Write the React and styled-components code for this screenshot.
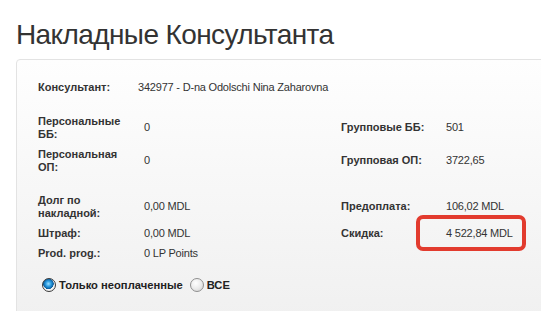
import React from "react";
import styled, { createGlobalStyle } from "styled-components";

const GlobalStyle = createGlobalStyle`
  html, body {
    margin: 0;
    padding: 0;
    background: #fff;
    overflow: hidden;
  }
  body {
    font-family: "Liberation Sans", Arial, sans-serif;
    color: #333;
  }
`;

const Page = styled.div`
  padding: 0 0 0 16px;
  width: 560px;
`;

const Title = styled.h1`
  margin: 18px 0 8px;
  font-size: 28px;
  line-height: 33px;
  font-weight: normal;
  color: #333;
  letter-spacing: -0.6px;
`;

const Panel = styled.section`
  border: 1px solid #e3e3e3;
  border-radius: 4px;
  background: linear-gradient(#fefefe, #f0f0f0 260px);
  padding: 17px 18px 40px;
  min-height: 260px;
  box-sizing: border-box;
`;

const ConsultantRow = styled.div`
  display: grid;
  grid-template-columns: 100px 1fr;
  padding: 3.5px 3px;
  line-height: 13px;
  font-size: 11px;
  margin-bottom: 14px;
`;

const InfoGrid = styled.div`
  display: grid;
  grid-template-columns: 106px 197px 105px 1fr;
  font-size: 11px;
  line-height: 13px;
`;

const Label = styled.div`
  padding: ${({ $bare }) => ($bare ? "0" : "3.5px 3px")};
  font-weight: bold;
  color: #333;
  display: flex;
  align-items: center;
`;

const Value = styled.div`
  position: relative;
  padding: 3.5px 3px;
  color: #333;
  letter-spacing: -0.2px;
  display: flex;
  align-items: center;

  ${({ $highlight }) =>
    $highlight &&
    `
    &::after {
      content: "";
      position: absolute;
      left: -27px;
      top: -8px;
      width: 110px;
      height: 36px;
      box-sizing: border-box;
      border: 4px solid #e23b2e;
      border-radius: 7px;
    }
  `}
`;

const Spacer = styled.div`
  grid-column: 1 / -1;
  height: 13px;
`;

const Filters = styled.div`
  display: flex;
  align-items: center;
  margin: 15px 0 0 7px;
  font-size: 11.2px;
  font-weight: bold;
  color: #222;
`;

const Option = styled.label`
  display: flex;
  align-items: center;
  margin-right: 7px;
`;

const RadioDot = styled.span`
  width: 14px;
  height: 14px;
  border-radius: 50%;
  box-sizing: border-box;
  margin-right: 3px;
  border: 1px solid ${({ $checked }) => ($checked ? "#3a3a3a" : "#8f8f8f")};
  background: ${({ $checked }) =>
    $checked
      ? "radial-gradient(circle at 45% 40%, #9fe0ff 0, #2a9be0 28%, #0b5d9c 52%, #f4f4f4 56%, #e3e3e3 100%)"
      : "radial-gradient(circle at 40% 35%, #ffffff 0, #ececec 50%, #cfcfcf 100%)"};
`;

const rows = [
  ["Персональные ББ:", "0", "Групповые ББ:", "501"],
  ["Персональная ОП:", "0", "Групповая ОП:", "3722,65"],
  null,
  ["Долг по накладной:", "0,00 MDL", "Предоплата:", "106,02 MDL"],
  ["Штраф:", "0,00 MDL", "Скидка:", "4 522,84 MDL"],
  ["Prod. prog.:", "0 LP Points", "", ""],
];

export default function App() {
  return (
    <Page>
      <GlobalStyle />
      <Title>Накладные Консультанта</Title>
      <Panel>
        <ConsultantRow>
          <Label $bare>Консультант:</Label>
          <Value style={{ padding: 0 }}>342977 - D-na Odolschi Nina Zaharovna</Value>
        </ConsultantRow>
        <InfoGrid>
          {rows.map((r, i) =>
            r ? (
              <React.Fragment key={i}>
                <Label>{r[0]}</Label>
                <Value>{r[1]}</Value>
                <Label>{r[2]}</Label>
                <Value $highlight={r[2] === "Скидка:"}>{r[3]}</Value>
              </React.Fragment>
            ) : (
              <Spacer key={i} />
            )
          )}
        </InfoGrid>
        <Filters>
          <Option>
            <RadioDot $checked />
            Только неоплаченные
          </Option>
          <Option>
            <RadioDot />
            ВСЕ
          </Option>
        </Filters>
      </Panel>
    </Page>
  );
}
